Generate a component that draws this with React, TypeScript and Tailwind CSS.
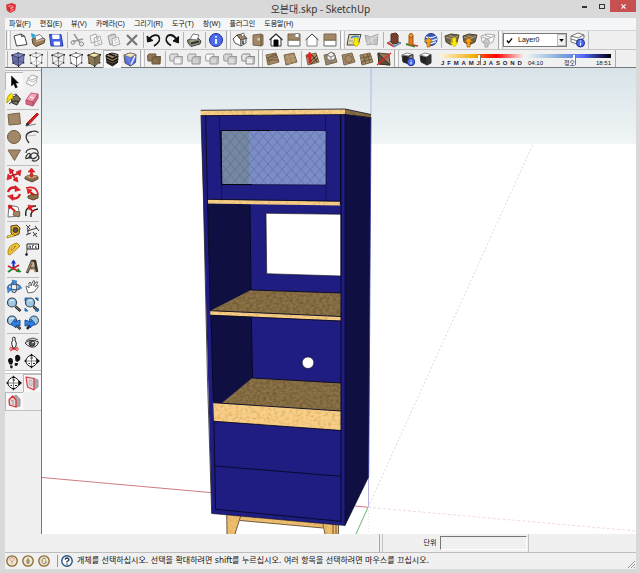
import { useState } from "react";
import type { ReactNode } from "react";

type Tool = { label: string; icon: ReactNode };
type Item = Tool | "sep" | "grip";

const menus = ["파일(F)", "편집(E)", "뷰(V)", "카메라(C)", "그리기(R)", "도구(T)", "창(W)", "플러그인", "도움말(H)"];
const months = ["J", "F", "M", "A", "M", "J", "J", "A", "S", "O", "N", "D"];

const Icon = ({ children }: { children: ReactNode }) => (
    <svg viewBox="0 0 18 18" className="block size-[18px]" fill="none" stroke="#333" strokeWidth="1" strokeLinejoin="round">
        {children}
    </svg>
);

// Isometric box used by the face style buttons
const Cube = ({ top = "#fff", left = "#fff", right = "#fff", line = "#555", wire = false }) => (
    <Icon>
        <path d="M3 5 9.500 7.500V16L4 13Z" fill={left} stroke={line} />
        <path d="M9.500 7.500 15 4.500 14.500 12.500 9.500 16Z" fill={right} stroke={line} />
        <path d="M3 5 9 3 15 4.500 9.500 7.500Z" fill={top} stroke={line} />
        {wire && <path d="M9 3V10.500L4 13M9 10.500 14.500 12.500" stroke={line} strokeWidth=".6" />}
        <path d="M2.500 4.500H4V6H2.500ZM14.500 4H16V5.500H14.500ZM9 7H10.300V8.300H9ZM9 15.500H10.300V17H9ZM3.500 12.500H4.700V14H3.500ZM14 12H15.300V13.500H14ZM8.500 2.300H9.700V3.500H8.500Z" fill="#222" stroke="none" />
    </Icon>
);

// Two overlapping solids
const Solids = ({ a = "#ddd", b = "#f4f4f4", line = "#999" }) => (
    <Icon>
        <path d="M2.500 5.500 4 4H11L10 11H3Z" fill={a} stroke={line} />
        <path d="M7 8 8.500 6.500H15.500L15 14H7Z" fill={b} stroke={line} />
        <path d="M7 8H14L15.500 6.500M14 8V14" stroke={line} strokeWidth=".6" />
    </Icon>
);

const Terrain = ({ children }: { children?: ReactNode }) => (
    <Icon>
        <path d="M3 5 13 3 16 12 5 15Z" fill="#a58a66" stroke="#7d684b" />
        {children}
    </Icon>
);

const Crate = ({ children, pale = false }: { children: ReactNode; pale?: boolean }) => (
    <Icon>
        <path d="M2 5 8 3 16 4 14 11 8 14 3 11Z" fill={pale ? "#fafafa" : "#6f624a"} stroke={pale ? "#aaa" : "#4d4333"} />
        <path d="M3 6 9 8 15 5M9 8 8 14M6 4.500 12 6.500" stroke={pale ? "#aaa" : "#b3a27c"} />
        {children}
    </Icon>
);

const Compass = () => (
    <Icon>
        <circle cx="8.500" cy="9" r="5.500" fill="#fff" stroke="#222" />
        <path d="M3 9H14M8.500 3.500V14.500" stroke="#666" strokeWidth=".8" />
        <path d="M7.500 6H10M5.500 11.500H7M10 11.500H12" stroke="#222" />
        <path d="M13.500 6 17 9 13.500 12ZM8.500 1.500 10.500 4H6.500ZM8.500 16.500 10.500 14H6.500ZM1 9 3 7.500V10.500Z" fill="#111" stroke="none" />
    </Icon>
);

const Glass = ({ children }: { children?: ReactNode }) => (
    <Icon>
        <path d="M10.500 10.500 15.500 15" stroke="#222" strokeWidth="2.500" />
        <path d="M10.500 10.500 15 14.500" stroke="#888" />
        <circle cx="7" cy="6.500" r="4.500" fill="#9fc8e4" stroke="#345" strokeWidth="1.200" />
        <path d="M4.500 6Q6 3.500 9 4.500" stroke="#e8f5ff" />
        {children}
    </Icon>
);

const Info = ({ x = 9, y = 9, r = 6.5 }) => (
    <>
        <circle cx={x} cy={y} r={r} fill="#4a6af0" stroke="#1d2f91" />
        <path d={`M${x} ${y - r * 0.15}V${y + r * 0.6}M${x} ${y - r * 0.6}v${r * 0.22}`} stroke="#fff" strokeWidth={r / 3.5} />
    </>
);

const upArrow = <path d="M6 16V11H3.500L7.500 6.500 11.500 11H9V16Z" fill="#ffa216" stroke="#a95f00" strokeWidth=".7" />;
const downArrow = <path d="M9.500 7H13V11.500H15L11.300 16 7.500 11.500H9.500Z" fill="#ffed00" stroke="#c9b400" strokeWidth=".7" />;

const rowOne: Item[] = [
    "grip",
    { label: "New", icon: <Icon><path d="M3 5 10 3 13.500 5 16 13.500 5.500 15Z" fill="#fff" stroke="#444" /><path d="M10 3 10.500 5.500 13.500 5" stroke="#444" /></Icon> },
    { label: "Open", icon: <Icon><path d="M3 8 10 6 16 8 15 12 7 15.500 4 13Z" fill="#9d8058" stroke="#54442c" /><path d="M6 5 11 3.500 14 7 7 10Z" fill="#fff" stroke="#777" /><path d="M7 10.500 15.500 8" stroke="#decaa5" /><path d="M2 2 6 3.500 5 8 2.500 6Z" fill="#25a9dd" stroke="none" /></Icon> },
    { label: "Save", icon: <Icon><path d="M2.500 3.500H14L16 15H4Z" fill="#4561e6" stroke="#2c3fae" /><path d="M5 3.500H12.500V8H5.500ZM6.500 10.500H13V14.500H7Z" fill="#fff" stroke="none" /></Icon> },
    "sep",
    { label: "Cut", icon: <Icon><path d="M5 3 11 12M14 8 4 10.500" stroke="#999" strokeWidth="1.600" /><circle cx="12.500" cy="13" r="2" stroke="#888" /><circle cx="4" cy="11.500" r="1.800" stroke="#888" /></Icon> },
    { label: "Copy", icon: <Icon><path d="M3 5 9 3 11 10 4.500 12ZM7 7 13 5 15 13 8 15Z" fill="#f8f8f8" stroke="#aaa" /><path d="M9 8 12 7M9.500 10.500 13 9.500M10 12.500 13 12" stroke="#bbb" /></Icon> },
    { label: "Paste", icon: <Icon><path d="M3 5 10 3 12 11 5 14Z" fill="#d6d6d6" stroke="#999" /><path d="M5 4 9 3M7 8 13 6 15 13 8 15Z" fill="#fafafa" stroke="#aaa" /><path d="M9 9.500 12 8.500M10 12 13 11" stroke="#bbb" /></Icon> },
    { label: "Delete", icon: <Icon><path d="M4 4 14 14M14 4 4 14" stroke="#777" strokeWidth="2.200" /></Icon> },
    "sep",
    { label: "Undo", icon: <Icon><path d="M4 8Q9 2.500 13.500 5 17 10 9 15" stroke="#111" strokeWidth="1.700" /><path d="M2 5 2.500 11 8 9.500Z" fill="#111" stroke="#111" /></Icon> },
    { label: "Redo", icon: <Icon><path d="M13.500 8Q9 2 4.500 5 .5 10 8 14.500" stroke="#111" strokeWidth="1.700" /><path d="M15.500 5.500 15.500 12 10 10Z" fill="#111" stroke="#111" /></Icon> },
    "sep",
    { label: "Print", icon: <Icon><path d="M2.500 9 13 7 16 10 15 13 6 15.500 3 12Z" fill="#85897a" stroke="#44483b" /><path d="M5 8 8 3 14 4 12 9Z" fill="#fff" stroke="#777" /><path d="M6 12.500 14 10.500" stroke="#222" strokeWidth="1.500" /><path d="M5 10 9 9" stroke="#8bc270" /></Icon> },
    "sep",
    { label: "Model Info", icon: <Icon><Info /></Icon> },
    "grip",
    { label: "Iso", icon: <Icon><path d="M2 8 6 4 10 9V15L4 12Z" fill="#fff" stroke="#555" /><path d="M6 4 12 3 16 7.500 10 9Z" fill="#a28768" stroke="#5f4b34" /><path d="M10 9 15 7.500V12L10 15Z" fill="#eee" stroke="#555" /><path d="M12 9.500V13" strokeWidth="1.500" /><path d="M10 3 13 2V5L11 6Z" fill="#fff" stroke="#555" strokeWidth=".7" /></Icon> },
    { label: "Top", icon: <Icon><path d="M4 4 12 3 14 4V14L12 15 4 14Z" fill="#a28768" stroke="#7b6446" /><path d="M12 3V15" stroke="#6a543a" /><path d="M8.500 7H11V9.500H8.500Z" fill="#dac8aa" stroke="none" /></Icon> },
    { label: "Front", icon: <Icon><path d="M4 8V15H14V8L9 3Z" fill="#fff" /><path d="M2.500 9 9 3 15.500 9" strokeWidth="1.300" /><path d="M7 9H11V15H7Z" fill="#000" stroke="#000" /></Icon> },
    { label: "Right", icon: <Icon><path d="M3 9H15V15H3Z" fill="#fff" stroke="#666" /><path d="M3 3H15V9H3Z" fill="#a28768" stroke="#7b6446" /><path d="M10 2.500H14V6.500H10Z" fill="#fff" stroke="#888" /></Icon> },
    { label: "Back", icon: <Icon><path d="M4 8V15H14V8L9 3Z" fill="#fff" stroke="#888" /><path d="M2.500 9 9 3 15.500 9" stroke="#444" /></Icon> },
    { label: "Left", icon: <Icon><path d="M3 9H15V15H3Z" fill="#fff" stroke="#666" /><path d="M3 3H15V9H3Z" fill="#a28768" stroke="#7b6446" /></Icon> },
    "grip",
    { label: "Add Location", icon: <Icon><path d="M4 3.500H16L13 14H2Z" fill="#ddd8ae" stroke="#444" /><path d="M6 7Q9 4 14 6" stroke="#3d83c8" strokeWidth="1.500" /><path d="M4 10H8" stroke="#999" />{downArrow}</Icon> },
    { label: "Toggle Terrain", icon: <Icon><path d="M2 4 8 6 15 3 14 14 10 13 4 14Z" fill="#c5c5c5" stroke="#aaa" /><path d="M3 13 15 4M8 6 10 13" stroke="#e4e4e4" /></Icon> },
    "sep",
    { label: "Add New Building", icon: <Icon><path d="M2 12 8 9 16 12 9 16Z" fill="#a9cbb3" stroke="#669" /><path d="M6 3 11 2 13 4V12L8 13 6 11Z" fill="#78402c" stroke="#54301f" /><path d="M3 12 8 15" stroke="#d23b31" strokeWidth="1.500" /><path d="M8 15 14 13" stroke="#58a4d8" /></Icon> },
    { label: "Photo Textures", icon: <Icon><path d="M3 13 12 15.500" stroke="#37843d" strokeWidth="2" /><path d="M6 5 8 3 10 5V14H6Z" fill="#e27b18" stroke="#a9560c" /><circle cx="8" cy="4.500" r="2" fill="#ee9d35" stroke="#a9560c" /><path d="M10 14 15 15" stroke="#c73325" strokeWidth="1.500" /></Icon> },
    { label: "Preview in Google Earth", icon: <Icon><circle cx="10" cy="8.500" r="6" fill="#3459b8" stroke="#223b89" /><path d="M5 6Q10 8 15 5M4.500 9Q10 11 16 8M8 13 15 11" stroke="#d9e7ff" strokeWidth="1.400" />{upArrow}</Icon> },
    "sep",
    { label: "Get Models", icon: <Crate>{downArrow}</Crate> },
    { label: "Share Model", icon: <Crate>{upArrow}</Crate> },
    { label: "Share Component", icon: <Crate pale><path d="M6 16V11H4L7.500 7 11 11H9V16Z" fill="#ccc" stroke="#aaa" /></Crate> },
    "grip",
];

const rowTwo: Item[] = [
    "sep",
    { label: "X-Ray", icon: <Cube top="#8b92c4" left="#656ba5" right="#737ab3" line="#474d7c" wire /> },
    { label: "Back Edges", icon: <Cube line="#aaa" wire /> },
    "sep",
    { label: "Wireframe", icon: <Cube top="none" left="none" right="none" line="#888" wire /> },
    { label: "Hidden Line", icon: <Cube line="#888" /> },
    { label: "Shaded", icon: <Cube top="#f5e8ad" left="#8d7a55" right="#7c6b4a" line="#6b5c40" /> },
    { label: "Shaded With Textures", icon: <Icon><path d="M3 5 9 3 15 4.500 14.500 12.500 9.500 16 4 13Z" fill="#a3926a" stroke="#222" /><path d="M3 6 9.500 9 15 6M3.500 9 9.500 12 15 9M4 11.500 9.500 14.500 14.500 11.500M6 4 12 6" stroke="#1c1914" strokeWidth="1.500" /></Icon> },
    { label: "Monochrome", icon: <Icon><path d="M3 5 9 3 15 4.500 14.500 12.500 9.500 16 4 13Z" fill="#596fe0" stroke="#555" /><path d="M3 5 9 3 15 4.500 9.500 7.500Z" fill="#f3e8b0" stroke="#777" strokeWidth=".7" /><path d="M4 6 9.500 15V8Z" fill="#6d80e8" stroke="none" /><path d="M14 6 10 14.500" stroke="#e6edff" strokeWidth="1.500" /></Icon> },
    "grip",
    { label: "Outer Shell", icon: <Solids a="#967a58" b="#87704f" line="#6a553a" /> },
    "sep",
    { label: "Intersect", icon: <Solids /> },
    { label: "Union", icon: <Solids b="#d0d0d0" /> },
    { label: "Subtract", icon: <Solids a="#fafafa" b="#d7d7d7" /> },
    { label: "Trim", icon: <Solids a="#d5d5d5" b="#ddd" /> },
    { label: "Split", icon: <Solids a="#e5e5e5" b="#eee" line="#888" /> },
    "grip",
    { label: "From Contours", icon: <Terrain><path d="M4 8 14 5M4 12Q6 5 13 4M6 13Q8 7 15 7M5 10 16 10" stroke="#64523a" strokeWidth=".8" /></Terrain> },
    { label: "From Scratch", icon: <Terrain><path d="M4 8 14 6M4.500 12 15 9M6 5 9 14M10 4 13 13" stroke="#c3aa83" strokeWidth=".7" /></Terrain> },
    "sep",
    { label: "Smoove", icon: <Terrain><path d="M6 13 14 5M8 14 15 8M9 5 14 12" stroke="#433723" /><path d="M6 13V7H3.500L6.500 2 9.500 6H8V13Z" fill="#e22" stroke="#c00" strokeWidth=".5" /></Terrain> },
    { label: "Stamp", icon: <Terrain><path d="M6 5 10 2 14 5V9L10 11 6 9Z" fill="#f2f2f2" stroke="#666" /><path d="M6 5 10 7 14 5M10 7V11M5 12 13 13" stroke="#777" /></Terrain> },
    { label: "Drape", icon: <Terrain><ellipse cx="9.500" cy="9" rx="3.700" ry="3.500" stroke="#7d684b" /></Terrain> },
    { label: "Add Detail", icon: <Terrain><path d="M4 8 14 6M4.500 12 15 9M6 5 9 14M10 4 13 13M4 14 13 4" stroke="#64523a" strokeWidth=".8" /></Terrain> },
    { label: "Flip Edge", icon: <Icon><path d="M3 3 14 4 15 15 4 14Z" fill="#8f7757" stroke="#5a4832" /><path d="M3 3 15 15 4 14Z" fill="#5e4d38" stroke="#3d3122" /><path d="M2 15 16 3" stroke="#e22" strokeWidth="1.400" /></Icon> },
    "grip",
    { label: "Shadow Settings", icon: <Icon><path d="M3 5 10 6V14L4 12Z" fill="#222" /><path d="M3 5 8 3 14 4.500 10 6Z" fill="#fff" stroke="#888" /><path d="M10 6 14 4.500V12L10 14Z" fill="#888" /><Info x={12} y={12} r={3.700} /></Icon> },
    { label: "Show Shadows", icon: <Icon><path d="M3 5 10 7V15L4 12Z" fill="#222" /><path d="M3 5 8 3 14 4.500 10 7Z" fill="#fff" stroke="#888" /><path d="M10 7 14 4.500V13L10 15Z" fill="#333" /></Icon> },
];

const sideTools: Item[] = [
    { label: "Select", icon: <Icon><path d="M6.500 4V14L8.800 11.700 10.500 16 12.300 15.200 10.500 11H13.500Z" fill="#000" stroke="#000" strokeWidth=".5" /></Icon> },
    { label: "Make Component", icon: <Icon><path d="M5 6 9 3 15 5 13 8 14 10 9 14 3 11 5 8Z" fill="#fafafa" stroke="#aaa" /><path d="M5 8 10 10 13 8M5 6 9 8 15 5" stroke="#bbb" /></Icon> },
    { label: "Paint Bucket", icon: <Icon><path d="M6 6 11 4 15.500 9 12 15 7 13Z" fill="#7a6e54" stroke="#333" /><path d="M6 6Q11 8 11 4" fill="#ddd" /><path d="M7 3Q1 6 2 13 4 9 8 8" fill="#ffe400" stroke="#b8a000" /><path d="M4 14Q9 9 14 12" stroke="#222" /></Icon> },
    { label: "Eraser", icon: <Icon><path d="M3 10 8 3 15 4 10 12Z" fill="#f7a5b8" stroke="#c0637a" /><path d="M3 10 10 12V16L3 14ZM10 12 15 4V8L10 16Z" fill="#d5677e" stroke="#b4526a" /><path d="M7 7 11 8" stroke="#fff" /></Icon> },
    "sep",
    { label: "Rectangle", icon: <Icon><path d="M3 4.500 14.500 3 15.500 14 4 15Z" fill="#a28768" stroke="#7b6446" /></Icon> },
    { label: "Line", icon: <Icon><path d="M4 13 14 3 15.500 4.500 6 14.500Z" fill="#db2020" stroke="#a31616" /><path d="M3 16 4 13 6 14.500Z" fill="#111" /><path d="M3 16 13 14" stroke="#666" strokeWidth=".8" /></Icon> },
    { label: "Circle", icon: <Icon><circle cx="9" cy="9" r="6.500" fill="#a28768" stroke="#6d573b" /></Icon> },
    { label: "Arc", icon: <Icon><path d="M6 15Q-1 6 9 3.500 12 2.500 15.500 4.500" stroke="#333" strokeWidth="1.300" /><path d="M4 8 13 7" stroke="#bbb" /></Icon> },
    { label: "Polygon", icon: <Icon><path d="M3 4 15.500 4 9.500 14.500Z" fill="#a28768" stroke="#7b6446" /></Icon> },
    { label: "Freehand", icon: <Icon><path d="M3 7C3 2 14 1 15 6S9 15 8 11 12 5 15 9 12 17 9 14M3 13C2 10 6 6 7 8S4 14 3 12M7 8V13" stroke="#333" strokeWidth="1.200" /></Icon> },
    "sep",
    { label: "Move", icon: <Icon><path d="M6 4 11 15M3 11 15 7" stroke="#c71920" strokeWidth="1.800" /><path d="M4 2.500 9 4.500 5 8ZM16 4 15 10 11 6ZM13 16 8 14 12 11ZM2 14 3 8 7 12Z" fill="#ef202a" stroke="#b5141c" strokeWidth=".6" /></Icon> },
    { label: "Push/Pull", icon: <Icon><path d="M2 11 8 8.500 15 10.500V13L9 16 2 13Z" fill="#806643" stroke="#67523a" /><path d="M2 11 8 8.500 15 10.500 9 13Z" fill="#c2a67c" stroke="#8b7552" /><path d="M7.500 11V6H5L8.500 2 12 6H9.500V11Z" fill="#ef2020" stroke="#b51414" strokeWidth=".5" /></Icon> },
    { label: "Rotate", icon: <Icon><path d="M3 8Q5 2 12 4M15 10Q13 16 6 14" stroke="#d81920" strokeWidth="2.300" /><path d="M10 1.500 15.500 6 10 7.500ZM8 16.500 2.500 12 8 10.500Z" fill="#e52029" stroke="#b5141c" strokeWidth=".5" /></Icon> },
    { label: "Follow Me", icon: <Icon><path d="M5 12 10 10 15 11V14L10 16 5 14Z" fill="#8a6e49" stroke="#5b482e" /><path d="M3 4Q14 1 15 11" stroke="#df2020" strokeWidth="1.700" /><path d="M4 5 9 6 5 10Z" fill="#e22" stroke="#c11" strokeWidth=".6" /><path d="M7 8 11 11" stroke="#d11" strokeWidth="2" /></Icon> },
    { label: "Scale", icon: <Icon><path d="M4 3 13 5 15 14 3 15Z" fill="#fff" stroke="#777" /><path d="M9 9 15 10 14 15 8 13Z" fill="#a28768" stroke="#7b6446" /><path d="M4 4 10 9" stroke="#d11" strokeWidth="1.700" /><path d="M3 3 8 4 4 7.500Z" fill="#d11" stroke="none" /></Icon> },
    { label: "Offset", icon: <Icon><path d="M3 14Q1 4 13 4M8 15Q7 8 15 7" stroke="#222" strokeWidth="1.400" /><path d="M10 10 7 6" stroke="#d11" strokeWidth="2" /><path d="M5 3 11 4 6 8Z" fill="#e22" stroke="#c11" strokeWidth=".5" /></Icon> },
    "sep",
    { label: "Tape Measure", icon: <Icon><path d="M6 4 12 3 15 6 14 12 9 14 6 11Z" fill="#f0b321" stroke="#4d4122" /><circle cx="10.500" cy="8" r="2.500" fill="#555" stroke="#333" /><path d="M2 14 9 12V14L2 16Z" fill="#ffda31" stroke="#8a7318" strokeWidth=".7" /></Icon> },
    { label: "Dimension", icon: <Icon><path d="M3 3 7 7M7 3 4 7M4 9 14 6M3 13 8 11M12 4 16 9M10 10 14 15M14 11 10 14M5 7V12" stroke="#222" strokeWidth=".9" /></Icon> },
    { label: "Protractor", icon: <Icon><path d="M3 14Q2 5 12 3L15 6 5 15Z" fill="#f1c439" stroke="#b08a1d" /><path d="M6 11Q6 7 11 6Z" fill="#f4f0df" stroke="#b08a1d" /></Icon> },
    { label: "Text", icon: <Icon><path d="M4 4H15.500V9H4Z" fill="#fff" stroke="#222" /><path d="M6 8.500V6H7.500V8.500M9.500 8.500V5.500H11M13.500 6H12.500V8H14M4 9 3.500 15" stroke="#333" strokeWidth=".8" /><circle cx="3.500" cy="14.500" r="1" fill="#111" /></Icon> },
    { label: "Axes", icon: <Icon><path d="M8.500 10V3" stroke="#1533d4" strokeWidth="2" /><path d="M6 5.500 8.500 1.500 11 5.500Z" fill="#1533d4" stroke="none" /><path d="M9 10 3 14" stroke="#168c24" strokeWidth="2" /><path d="M3 8 15 14M9 10 14 7" stroke="#cf1e26" strokeWidth="1.600" /><path d="M13 10 16.500 14 11 14Z" fill="#168c24" stroke="none" /></Icon> },
    { label: "3D Text", icon: <Icon><path d="M4 15 9 3H12L14 14M7 10H12" stroke="#3d3427" strokeWidth="2.600" /><path d="M4 14 9 3.500 12 14M6 10H11" stroke="#a98d68" strokeWidth="1.200" /></Icon> },
    "sep",
    { label: "Orbit", icon: <Icon><ellipse cx="9" cy="9" rx="6" ry="2.800" stroke="#2f6fb4" strokeWidth="1.400" /><ellipse cx="9" cy="9" rx="2.800" ry="5.500" stroke="#54565e" strokeWidth="1.200" /><path d="M7 2 12 3 9 7ZM2 9 7 11 3 15ZM14 7 17 10 13 12Z" fill="#3b8ee6" stroke="#27609f" strokeWidth=".5" /></Icon> },
    { label: "Pan", icon: <Icon><path d="M5 15 3 9Q3 7 5 9L6 10 6 5Q7 3 8 5V8L10 3Q12 2 11.500 4L10.500 8 13 4Q15 3 14.500 5L12 9 14 7.500Q16 7 15 9L11 14Z" fill="#fff" stroke="#666" /></Icon> },
    { label: "Zoom", icon: <Glass /> },
    { label: "Zoom Extents", icon: <Glass><path d="M2 2H5L2 5ZM15 2H12L15 5ZM2 15V12L5 15ZM15 15H12L15 12Z" fill="#276fbc" stroke="#276fbc" /></Glass> },
    { label: "Previous View", icon: <Glass><path d="M6 10 10 5V8L15 6V12L11 11V14Z" fill="#2f7fe0" stroke="#1d549d" /></Glass> },
    { label: "Next View", icon: <Icon><path d="M8 10 4 15" stroke="#222" strokeWidth="2.500" /><circle cx="11" cy="6.500" r="4.500" fill="#9fc8e4" stroke="#345" /><path d="M12 9.500 8 5V8L2 6V12L7 11V14Z" fill="#2f7fe0" stroke="#1d549d" /></Icon> },
    "sep",
    { label: "Position Camera", icon: <Icon><path d="M4 15 14 15M5 13 13 17M13 13 5 17" stroke="#e03434" /><path d="M8.500 3Q11 3 10 6 12 9 11 12L9.500 14H8L7 11Q6 8 8 6 6.500 4 8.500 3Z" fill="#fff" stroke="#222" /></Icon> },
    { label: "Look Around", icon: <Icon><path d="M2 9Q8 4 15.500 8 14 14 8 13 4 12 2 9Z" fill="#ddd" stroke="#333" /><path d="M3 7Q9 2 15 6" stroke="#777" strokeWidth="1.500" /><circle cx="9" cy="9.500" r="2.800" fill="#555" /><circle cx="10" cy="8.500" r=".8" fill="#fff" stroke="none" /></Icon> },
    { label: "Walk", icon: <Icon><path d="M3 9Q3 6 5.500 6T8 10L7 12.500H4.500ZM5 13.500H7.500Q8 16.500 6.500 16.500T5 13.500ZM10 5Q11 2 13.500 3T15 8L12.500 10 10.500 9ZM10 11 13 11Q13 14 11 14T10 11Z" fill="#111" stroke="none" /></Icon> },
    { label: "Section Plane", icon: <Compass /> },
    "grip",
    { label: "Add Section Plane", icon: <Compass /> },
    { label: "Display Section Planes", icon: <Icon><path d="M7 6 10 4 15 6V13L12 15 7 12Z" fill="#aaa" stroke="#999" /><path d="M3 3 11 4.500V16L4.500 13Z" fill="#ecdede" stroke="#d9343c" strokeWidth="1.200" /><path d="M6 6.500 9 6.500V12L6.500 11Z" fill="#ddd" stroke="#aaa" strokeWidth=".8" /></Icon> },
    { label: "Display Section Cuts", icon: <Icon><path d="M8 5 11 3 15 7V14L11 15 7 12Z" fill="#aaa" stroke="#999" /><path d="M4 8 7.500 4 11 8V15L4.500 13Z" fill="#ead9d7" stroke="#dc3036" strokeWidth="1.300" /><path d="M6 9 8 8V13" stroke="#999" /></Icon> },
];

const pressed = ["Select", "Shaded With Textures", "Display Section Planes", "Display Section Cuts"];

const ToolButton = ({ tool }: { tool: Tool }) => (
    <button
        type="button"
        aria-label={tool.label}
        className={"size-[18px] shrink-0 " + (pressed.includes(tool.label) ? "bg-[#f8f8f8] shadow-[inset_1px_1px_0_#b8b8b8]" : "hover:bg-white")}
    >
        {tool.icon}
    </button>
);

const Grip = () => (
    <span className="flex w-[6px] shrink-0 items-center justify-center gap-px self-stretch">
        <span className="h-full w-px bg-[#a8a8a8]" />
        <span className="h-full w-px bg-white" />
        <span className="h-full w-px bg-[#c0c0c0]" />
    </span>
);

const Toolbar = ({ items }: { items: Item[] }) => (
    <>
        {items.map((item, i) => {
            if (item === "grip") return <Grip key={i} />;
            if (item === "sep") return <span key={i} className="flex w-1 shrink-0 justify-center"><span className="h-4 w-px bg-[#b4b4b4]" /></span>;
            return <ToolButton key={i} tool={item} />;
        })}
    </>
);

const SideBar = () => (
    <aside className="flex w-[37px] shrink-0 flex-col border-r border-[#777] bg-[#f0f0f0]">
        <div className="mb-px h-[3px] border-b border-[#bbb]" />
        <div className="grid grid-cols-2 justify-items-center">
            {sideTools.map((item, i) => {
                if (item === "grip") return <span key={i} className="col-span-2 h-1 w-full border-y border-[#c4c4c4] bg-white" />;
                if (item === "sep") return <span key={i} className="col-span-2 h-[2px] w-8 border-b border-[#bdbdbd]" />;
                return <ToolButton key={i} tool={item} />;
            })}
        </div>
        <div className="border-b border-[#c0c0c0]" />
    </aside>
);

const range =
    "block h-[11px] w-full appearance-none bg-[length:100%_4px] bg-no-repeat [&::-webkit-slider-thumb]:h-[10px] [&::-webkit-slider-thumb]:w-[3px] [&::-webkit-slider-thumb]:appearance-none [&::-webkit-slider-thumb]:border-r [&::-webkit-slider-thumb]:border-[#777] [&::-webkit-slider-thumb]:bg-white";

const ShadowSliders = () => (
    <div className="flex h-full items-start gap-[5px] border-r border-[#aaa] pt-1 pr-1 pl-[5px] font-['Liberation_Sans','Noto_Sans_CJK_KR',sans-serif] text-[6px] leading-[6px] text-black">
        <div className="w-[83px]">
            <input aria-label="Date" type="range" min={0} max={100} defaultValue={47} className={range + " -mb-[5px] bg-[linear-gradient(90deg,#fff4d8,#f0ac00_43%,#ff4a00_50%,#f00_68%,#f6e9e4)]"} />
            <div className="flex justify-between px-px font-bold text-[#223]">
                {months.map((m, i) => <span key={i}>{m}</span>)}
            </div>
        </div>
        <div className="w-[83px]">
            <input aria-label="Time" type="range" min={0} max={100} defaultValue={56} className={range + " -mb-[5px] bg-[linear-gradient(90deg,#e6f0f5,#7ea8d8_40%,#5a6ffb_65%,#1b1c66_88%,#000)]"} />
            <div className="flex justify-between text-[#112]">
                <span>04:10</span>
                <span>정오</span>
                <span>18:51</span>
            </div>
        </div>
    </div>
);

// Oven cabinet, drawn in window coordinates
const Model = () => (
    <svg viewBox="42 68 594 466" preserveAspectRatio="xMinYMin slice" className="block h-full w-full" role="img" aria-label="Model">
        <defs>
            <linearGradient id="sky" x1="0" y1="0" x2="0" y2="1">
                <stop offset="0" stopColor="#d8e3e9" />
                <stop offset="1" stopColor="#f1f5f5" />
            </linearGradient>
            <pattern id="mesh" width="9.400" height="11" patternUnits="userSpaceOnUse" x="221" y="131">
                <path d="M0 0 9.400 11M9.400 0 0 11" stroke="#4c5a90" strokeWidth=".7" opacity=".7" />
            </pattern>
            <filter id="grain" x="0" y="0" width="1" height="1">
                <feTurbulence type="fractalNoise" baseFrequency=".28 .35" numOctaves="2" seed="4" />
                <feColorMatrix values="0 0 0 0 .72  0 0 0 0 .42  0 0 0 0 .1  2.200 0 0 0 -.95" />
                <feComposite in2="SourceGraphic" operator="in" result="n" />
                <feMerge>
                    <feMergeNode in="SourceGraphic" />
                    <feMergeNode in="n" />
                </feMerge>
            </filter>
            <filter id="shade" x="0" y="0" width="1" height="1" colorInterpolationFilters="sRGB">
                <feTurbulence type="fractalNoise" baseFrequency=".3 .4" numOctaves="2" seed="9" />
                <feColorMatrix values="0 0 0 0 .4  0 0 0 0 .31  0 0 0 0 .16  1.600 0 0 0 -.6" />
                <feComposite in2="SourceGraphic" operator="in" result="n" />
                <feMerge>
                    <feMergeNode in="SourceGraphic" />
                    <feMergeNode in="n" />
                </feMerge>
            </filter>
        </defs>
        <rect x="42" y="68" width="1400" height="1400" fill="#fff" />
        <rect x="42" y="68" width="1400" height="76" fill="url(#sky)" />

        <path d="M42 477.500 212 492.700M355 506 368 507.300" stroke="#c4585e" strokeWidth=".8" />
        <path d="M368 507.300 636 531" stroke="#eed0d4" strokeDasharray="3 2" strokeWidth=".8" />
        <path d="M368 507.300 533 144" stroke="#ccd4cc" strokeDasharray="2 2" strokeWidth=".8" />
        <path d="M368 507.300 356 534" stroke="#55b05d" strokeWidth=".9" />
        <path d="M371 68V115M368.500 476V507" stroke="#b4b4e2" />
        <path d="M368.500 507V534" stroke="#e0e0f2" strokeDasharray="1 2" />

        <g fill="#edbe72" filter="url(#grain)">
            <path d="M226.700 513 241 515 235 534H227ZM241 515 323 523V528L240 520.500ZM322.700 522 338.500 525 338 534H325Z" />
        </g>
        <path d="M226.700 513 227 534M241 515 235 534M240 520.500 323 528M322.700 523 325 534M333 524V534M336 524V534M338.500 525V534" stroke="#4d3c22" strokeWidth=".8" fill="none" />

        <path d="M345 114 371 117 368.700 476.700 345 525.500Z" fill="#0f0f42" />
        <path d="M371 117 368.700 476.700" stroke="#3434a0" strokeWidth=".8" />
        <path d="M201 115 345 114 345 525.500 211.700 513.500Z" fill="#1f1d82" />
        <path d="M201 115 203.500 200 207.500 380 211.700 513.500" stroke="#222" strokeWidth=".8" fill="none" />

        <path d="M207.500 203 250 204.500 251 290 252.500 378 222 403 213.300 402Z" fill="#0f0f42" />
        <path d="M250 204.500 251 290M251.400 318 252.500 378" stroke="#08082c" />
        <path d="M266 213.300 341 214.300V276L266.700 273.700Z" fill="#fff" stroke="#111" strokeWidth=".6" />
        <circle cx="308" cy="362.700" r="5.800" fill="#fff" stroke="#111" strokeWidth=".6" />

        <g fill="#8b7248" filter="url(#shade)">
            <path d="M251 290 341 293V316.500L210.300 310.700Z" />
            <path d="M252.300 378 341 383V411L222 403Z" />
            <path d="M345 109 371 114.500V118L345 114.500Z" />
        </g>
        <g fill="#f8cf88" filter="url(#grain)">
            <path d="M200.700 110.500 345 109V114.500L200.700 115.500Z" />
            <path d="M207.300 199.500 341 201.500V205.500L207.300 203.500Z" />
            <path d="M210.300 310.700 341 316.500V320.700L210.300 315Z" />
            <path d="M213.300 402.700 341 411V430.300L214 421.300Z" />
        </g>

        <g stroke="#080820" fill="none">
            <path d="M200.700 110.300 345 109 371 114.500M201 115.700 345 114.500 371 117.500" strokeWidth=".8" />
            <path d="M205.700 115.500 207.500 203 210.300 310M211 315 213.300 402M214 421.500 215.500 509.300 341 521.300" strokeWidth=".9" />
            <path d="M340.700 115V205" strokeWidth="1.500" />
            <path d="M341 205V522" />
            <path d="M345 114.500V525.500" strokeWidth=".7" />
            <path d="M207.300 199.300 341 201.200M251 290 341 293M210.300 310.700 341 316.500M210.300 315.200 341 321M252.300 378 341 383M213.300 402.700 341 411M214 421.300 341 430.500M215 466 341 476.300" strokeWidth=".9" />
            <path d="M219.300 115.700 221.700 199M325.500 115 326 201" strokeWidth=".5" />
            <path d="M211.700 513.500 345 525.500 368.700 476.700" strokeWidth=".6" />
        </g>

        <path d="M221 130.700 249 130.700V184.500L221.700 184.300Z" fill="#7588a0" />
        <path d="M249 130.700H326V185L249 184.500Z" fill="#7b8cc6" />
        <path d="M221 130.700H326V185L221.700 184.300Z" fill="url(#mesh)" />
        <path d="M221 130.500H326V185L221.700 184.500Z" fill="none" stroke="#0d0d35" strokeWidth=".7" />
        <path d="M270 130.500H221L221.800 184.500H252" fill="none" stroke="#060615" />
    </svg>
);

export default function App() {
    const [layer, setLayer] = useState("Layer0");

    return (
        <div className="flex h-screen flex-col overflow-hidden bg-[#d9d9d9] pr-1 pb-1 pl-[5px] font-['DejaVu_Sans','Noto_Sans_CJK_KR',sans-serif] text-[8px] leading-3 text-[#111]">
            <header className="grid h-[18px] shrink-0 grid-cols-[1fr_auto_1fr] items-start">
                <svg viewBox="0 0 12 12" className="mt-[3px] ml-px size-[10px]">
                    <path d="M0 2 7 0 12 2 11 9 5 12 1 9Z" fill="#dd2c32" />
                    <path d="M2 4 7 3 9 5 5 6 9 8 5 10" fill="none" stroke="#f7b5b7" strokeWidth="1" />
                </svg>
                <h1 className="font-['Noto_Sans_CJK_KR',sans-serif] text-[10px] leading-[18px] text-[#333]">오븐대.skp - SketchUp</h1>
                <div className="flex justify-end">
                    <button type="button" aria-label="Minimize" className="flex h-3 w-5 items-end justify-center pb-1"><span className="h-[2px] w-[5px] bg-[#333]" /></button>
                    <button type="button" aria-label="Maximize" className="flex h-3 w-4 items-center justify-center"><span className="h-[5px] w-[6px] border border-[#333]" /></button>
                    <button type="button" aria-label="Close" className="flex h-3 w-[26px] items-center justify-center bg-[#c75050]">
                        <svg viewBox="0 0 6 6" className="size-[5px]"><path d="M.500 .500 5.500 5.500M5.500 .500.500 5.500" stroke="#fff" strokeWidth="1.300" /></svg>
                    </button>
                </div>
            </header>

            <nav className="flex h-3 shrink-0 items-center gap-[9px] bg-[#f5f6f7] pl-1 font-['Liberation_Sans','Noto_Sans_CJK_KR',sans-serif] text-[7px]">
                {menus.map((m) => <button key={m} type="button" className="whitespace-nowrap">{m}</button>)}
            </nav>

            <div className="flex h-[19px] shrink-0 items-center border-t border-[#d5d5d5] bg-[#f0f0f0]">
                <Toolbar items={rowOne} />
                <div className="mr-[2px] flex h-[14px] w-16 items-center border border-[#777] bg-white pl-[2px]">
                    <svg viewBox="0 0 8 8" className="size-[7px] shrink-0"><path d="M1 4 3 6.500 7 1.500" fill="none" stroke="#000" strokeWidth="1.500" /></svg>
                    <select
                        aria-label="Layer"
                        value={layer}
                        onChange={(e) => setLayer(e.target.value)}
                        className="h-3 min-w-0 flex-1 appearance-none pl-[5px] font-['Liberation_Sans',sans-serif] text-[7px] leading-3 outline-none"
                    >
                        <option>Layer0</option>
                    </select>
                    <span className="flex h-3 w-[9px] items-center justify-center border border-[#bbb] bg-[#f0f0f0]">
                        <svg viewBox="0 0 6 4" className="h-[3px] w-[5px]"><path d="M0 0H6L3 4Z" /></svg>
                    </span>
                </div>
                <ToolButton tool={{ label: "Layer Manager", icon: <Icon><path d="M2 5 9 2 15 4 9 7ZM2 5V8L9 10 15 7V4M2 8V11L8 13" fill="#fff" stroke="#777" /><Info x={11.500} y={12} r={4} /></Icon> }} />
                <span className="ml-px h-full w-px bg-[#bbb]" />
            </div>
            <div className="flex h-[19px] shrink-0 items-center border-y border-t-[#c4c4c4] border-b-[#777] bg-[#f0f0f0]">
                <Toolbar items={rowTwo} />
                <ShadowSliders />
            </div>

            <div className="flex min-h-0 flex-1">
                <SideBar />
                <main className="min-w-0 flex-1 overflow-hidden bg-white"><Model /></main>
            </div>

            <div className="flex h-[19px] shrink-0 items-center border-b border-[#bdbdbd] bg-[#f0f0f0]">
                <div className="h-full w-[59.5%] border-r border-[#aaa]" />
                <div className="ml-[2px] flex h-full items-center gap-1 border-x border-[#c4c4c4] pr-px pl-10">
                    <label htmlFor="unit" className="text-[7px]">단위</label>
                    <input id="unit" className="h-[14px] w-[87px] border border-t-[#777] border-r-white border-b-white border-l-[#777] bg-[#f0f0f0] px-1 outline-none" />
                </div>
            </div>
            <footer className="flex h-4 shrink-0 items-center bg-[#f0f0f0] pl-px">
                {["M6 9 6 6M4 4.500A2 2 0 1 1 8 4.500Q7 6 6 7 5 6 4 4.500", "M6 3V9M5 5H7V8H5Z", "M8 4Q4 2 4 6T8 8V6H7"].map((d, i) => (
                    <button key={i} type="button" aria-label={["Geo-location", "Credits", "Sign in"][i]} className="mr-1 size-3">
                        <svg viewBox="0 0 12 12" className="block size-3" fill="none">
                            <circle cx="6" cy="6" r="5.200" fill="#efe6cd" stroke="#8a6831" strokeWidth="1.300" />
                            <path d={d} stroke={i === 0 ? "#dc9a8e" : "#8b8270"} />
                        </svg>
                    </button>
                ))}
                <span className="mx-[3px] h-3 w-px bg-[#999]" />
                <button type="button" aria-label="Help" className="mr-1 size-3">
                    <svg viewBox="0 0 12 12" className="block size-3" fill="none">
                        <circle cx="6" cy="6" r="5.200" fill="#fff" stroke="#24527c" strokeWidth="1.400" />
                        <path d="M4 4.500Q4.500 3 6 3T8 4.700Q8 5.500 6 6.500V7.500M6 8.500V9.700" stroke="#17334f" strokeWidth="1.300" />
                    </svg>
                </button>
                <p className="flex-1 truncate">개체를 선택하십시오. 선택을 확대하려면 shift를 누르십시오. 여러 항목을 선택하려면 마우스를 끄십시오.</p>
                <svg viewBox="0 0 9 9" className="size-[9px] self-end"><path d="M1 8 8 1M4 8 8 4M7 8 8 7" stroke="#999" /></svg>
            </footer>
        </div>
    );
}
